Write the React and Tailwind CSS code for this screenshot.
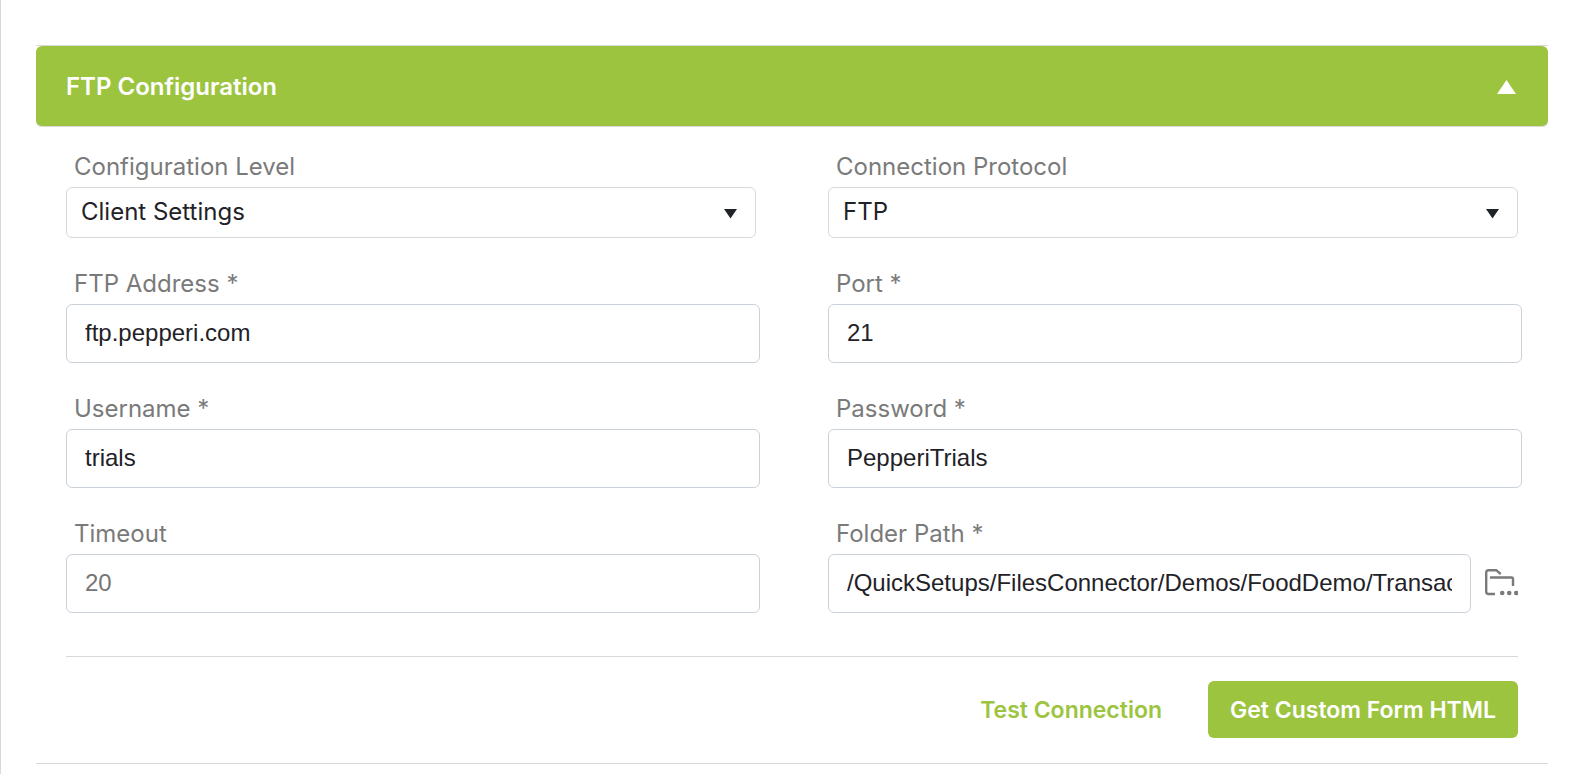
import React, { useState } from "react";

const labelClass = "block pl-2 mb-1 leading-8 text-[#7a7a7a]";

const SelectField = ({ id, label, options }) => (
  <div>
    <label htmlFor={id} className={labelClass}>{label}</label>
    <div className="relative">
      <select
        id={id}
        className="block w-full h-[51px] pl-3.5 pr-12 pb-0.5 appearance-none rounded-md border border-[#d9d9dc] bg-white text-[#1f2227] outline-none"
      >
        {options.map((option) => (
          <option key={option}>{option}</option>
        ))}
      </select>
      <svg className="absolute right-[19px] top-[22px] w-[13px] h-[10px] pointer-events-none" viewBox="0 0 13 10">
        <path d="M0 0h13L6.500 9.500z" fill="#1f2227" />
      </svg>
    </div>
  </div>
);

const inputClass =
  "block h-[59px] px-[18px] pb-0.5 rounded-md border border-[#ccd2da] bg-white text-[#1f2227] placeholder-[#757575] font-['Liberation_Sans',Arial,sans-serif] outline-none";

const TextField = ({ id, label, value, placeholder }) => (
  <div>
    <label htmlFor={id} className={labelClass}>{label}</label>
    <div className="-mr-1">
      <input id={id} type="text" defaultValue={value} placeholder={placeholder} className={`${inputClass} w-full`} />
    </div>
  </div>
);

const FolderIcon = () => (
  <svg className="w-[33px] h-[27px]" viewBox="0 0 33 27" fill="none" stroke="#7a7a7a" strokeWidth="2.400">
    <path d="M10 25H3.500Q1.200 25 1.200 22.700V3.500Q1.200 1.200 3.500 1.200H11.200L15.700 5" />
    <path d="M5 8.500H26.500Q28 8.500 28 10V17" />
    <g fill="#7a7a7a" stroke="none">
      <circle cx="17.200" cy="24" r="2.300" />
      <circle cx="24.200" cy="24" r="2.300" />
      <circle cx="31.200" cy="24" r="2.300" />
    </g>
  </svg>
);

const App = () => {
  const [open, setOpen] = useState(true);

  return (
    <div className="min-h-screen border-l border-[#d9d9db] bg-white pl-[35px] pr-8 pt-[45px] text-2xl font-[Inter,sans-serif]">
      <section className="border-y border-[#d9d9db]">
        <button
          type="button"
          aria-expanded={open}
          onClick={() => setOpen(!open)}
          className="flex w-full h-[81px] items-center justify-between rounded-md border-b border-[#d9d9db] bg-[#9cc43f] pl-[30px] pr-8 pt-0.5 font-semibold text-white"
        >
          FTP Configuration
          <svg className={open ? "w-[19px] h-[14px]" : "w-[19px] h-[14px] rotate-180"} viewBox="0 0 19 14">
            <path d="M0 14h19L9.500 0z" fill="#fff" />
          </svg>
        </button>

        {open && (
          <form className="px-[30px] pt-6" onSubmit={(e) => e.preventDefault()}>
            <div className="grid grid-cols-2 gap-x-[72px] gap-y-[30px]">
              <SelectField id="level" label="Configuration Level" options={["Client Settings"]} />
              <SelectField id="protocol" label="Connection Protocol" options={["FTP", "SFTP"]} />
              <TextField id="address" label="FTP Address *" value="ftp.pepperi.com" />
              <TextField id="port" label="Port *" value="21" />
              <TextField id="username" label="Username *" value="trials" />
              <TextField id="password" label="Password *" value="PepperiTrials" />
              <TextField id="timeout" label="Timeout" placeholder="20" />
              <div>
                <label htmlFor="folder" className={labelClass}>Folder Path *</label>
                <div className="flex items-center gap-3.5">
                  <input
                    id="folder"
                    type="text"
                    defaultValue="/QuickSetups/FilesConnector/Demos/FoodDemo/Transactions"
                    className={`${inputClass} min-w-0 flex-1`}
                  />
                  <button type="button" aria-label="Browse folders" className="pb-0.5">
                    <FolderIcon />
                  </button>
                </div>
              </div>
            </div>

            <div className="mt-[43px] flex justify-end gap-6 border-t border-[#d9d9db] pt-6 pb-[25px] text-[23px] font-semibold">
              <button type="button" className="h-[57px] px-[22px] pt-0.5 rounded-md text-[#9cc43f]">Test Connection</button>
              <button type="submit" className="h-[57px] px-[22px] pt-0.5 rounded-md bg-[#9cc43f] text-white">
                Get Custom Form HTML
              </button>
            </div>
          </form>
        )}
      </section>
    </div>
  );
};

export default App;
